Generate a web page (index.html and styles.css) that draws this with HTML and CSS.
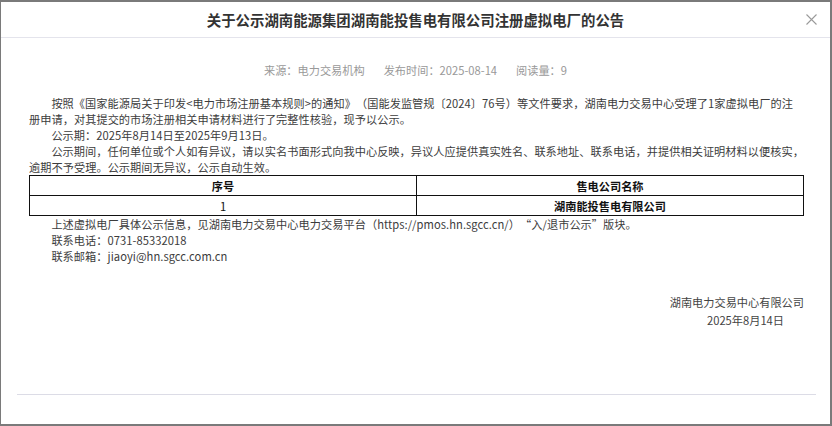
FILE: index.html
```html
<!DOCTYPE html>
<html lang="zh-CN">
<head>
<meta charset="utf-8">
<title>公告</title>
<link rel="stylesheet" href="styles.css">
</head>
<body>
<div class="overlay">
  <div class="modal">
    <div class="modal-header">
      <h1 class="title">关于公示湖南能源集团湖南能投售电有限公司注册虚拟电厂的公告</h1>
      <button class="close" aria-label="关闭">
        <svg width="11" height="11" viewBox="0 0 11 11"><path d="M0.5 0.5L10.5 10.5M10.5 0.5L0.5 10.5" stroke="#9a9a9a" stroke-width="1.1" fill="none"/></svg>
      </button>
    </div>
    <div class="modal-body">
      <div class="meta">
        <span>来源：电力交易机构</span>
        <span>发布时间：2025-08-14</span>
        <span>阅读量：9</span>
      </div>
      <div class="content">
        <p class="indent">按照《国家能源局关于印发&lt;电力市场注册基本规则&gt;的通知》（国能发监管规〔2024〕76号）等文件要求，湖南电力交易中心受理了1家虚拟电厂的注册申请，对其提交的市场注册相关申请材料进行了完整性核验，现予以公示。</p>
        <p class="indent">公示期：2025年8月14日至2025年9月13日。</p>
        <p class="indent">公示期间，任何单位或个人如有异议，请以实名书面形式向我中心反映，异议人应提供真实姓名、联系地址、联系电话，并提供相关证明材料以便核实，逾期不予受理。公示期间无异议，公示自动生效。</p>
        <table class="list">
          <thead>
            <tr><th>序号</th><th>售电公司名称</th></tr>
          </thead>
          <tbody>
            <tr><td>1</td><td class="name">湖南能投售电有限公司</td></tr>
          </tbody>
        </table>
        <div class="after">
          <p class="indent">上述虚拟电厂具体公示信息，见湖南电力交易中心电力交易平台（https://pmos.hn.sgcc.cn/）“入/退市公示”版块。</p>
          <p class="indent">联系电话：0731-85332018</p>
          <p class="indent">联系邮箱：jiaoyi@hn.sgcc.com.cn</p>
        </div>
        <div class="sign">
          <p>湖南电力交易中心有限公司</p>
          <p class="date">2025年8月14日</p>
        </div>
      </div>
    </div>
    <div class="modal-footer"></div>
  </div>
</div>
</body>
</html>
```

FILE: styles.css
```css
html, body {
  margin: 0;
  padding: 0;
  background: #7a7a7a;
  height: 426px;
  overflow: hidden;
}

body {
  font-family: "Noto Sans CJK SC", "Noto Sans", sans-serif;
  text-spacing-trim: space-all;
}

.overlay {
  padding-top: 2px;
  padding-left: 1px;
}

.modal {
  width: 829px;
  height: 422px;
  background: #fff;
  display: flex;
  flex-direction: column;
}

.modal-header {
  position: relative;
  height: 35px;
  border-bottom: 1px solid #e4e4ec;
  display: flex;
  align-items: center;
  justify-content: center;
}

.title {
  margin: 0;
  font-size: 14.4px;
  font-weight: bold;
  color: #333;
  line-height: 20px;
}

.close {
  position: absolute;
  right: 13px;
  top: 12px;
  border: 0;
  background: transparent;
  padding: 0;
  width: 11px;
  height: 11px;
  display: flex;
}

.modal-body {
  flex: 1;
  display: flex;
  flex-direction: column;
}

.meta {
  margin-top: 24px;
  display: flex;
  justify-content: center;
  gap: 19px;
  font-size: 11.2px;
  line-height: 16px;
  color: #999;
}

.content {
  padding: 17px 26px 0 28px;
  font-size: 11.2px;
  line-height: 16px;
  color: #3c3c3c;
}

.content p {
  margin: 0;
}

.indent {
  text-indent: 2em;
  letter-spacing: 0.045px;
}

.list {
  width: 100%;
  border-collapse: collapse;
  table-layout: fixed;
  color: #111;
}

.list th,
.list td {
  border: 1px solid #111;
  height: 19px;
  padding: 0;
  text-align: center;
  font-size: 11.2px;
  line-height: 16px;
}

.list th {
  font-weight: bold;
}

.list td.name {
  font-weight: bold;
}

.sign {
  margin-top: 29px;
  display: flex;
  flex-direction: column;
  align-items: flex-end;
  line-height: 18px;
  color: #444;
}

.sign .date {
  padding-right: 20px;
}

.modal-footer {
  height: 29px;
  margin: 0 14px 0 16px;
  border-top: 1px solid #dcdce6;
}
```
